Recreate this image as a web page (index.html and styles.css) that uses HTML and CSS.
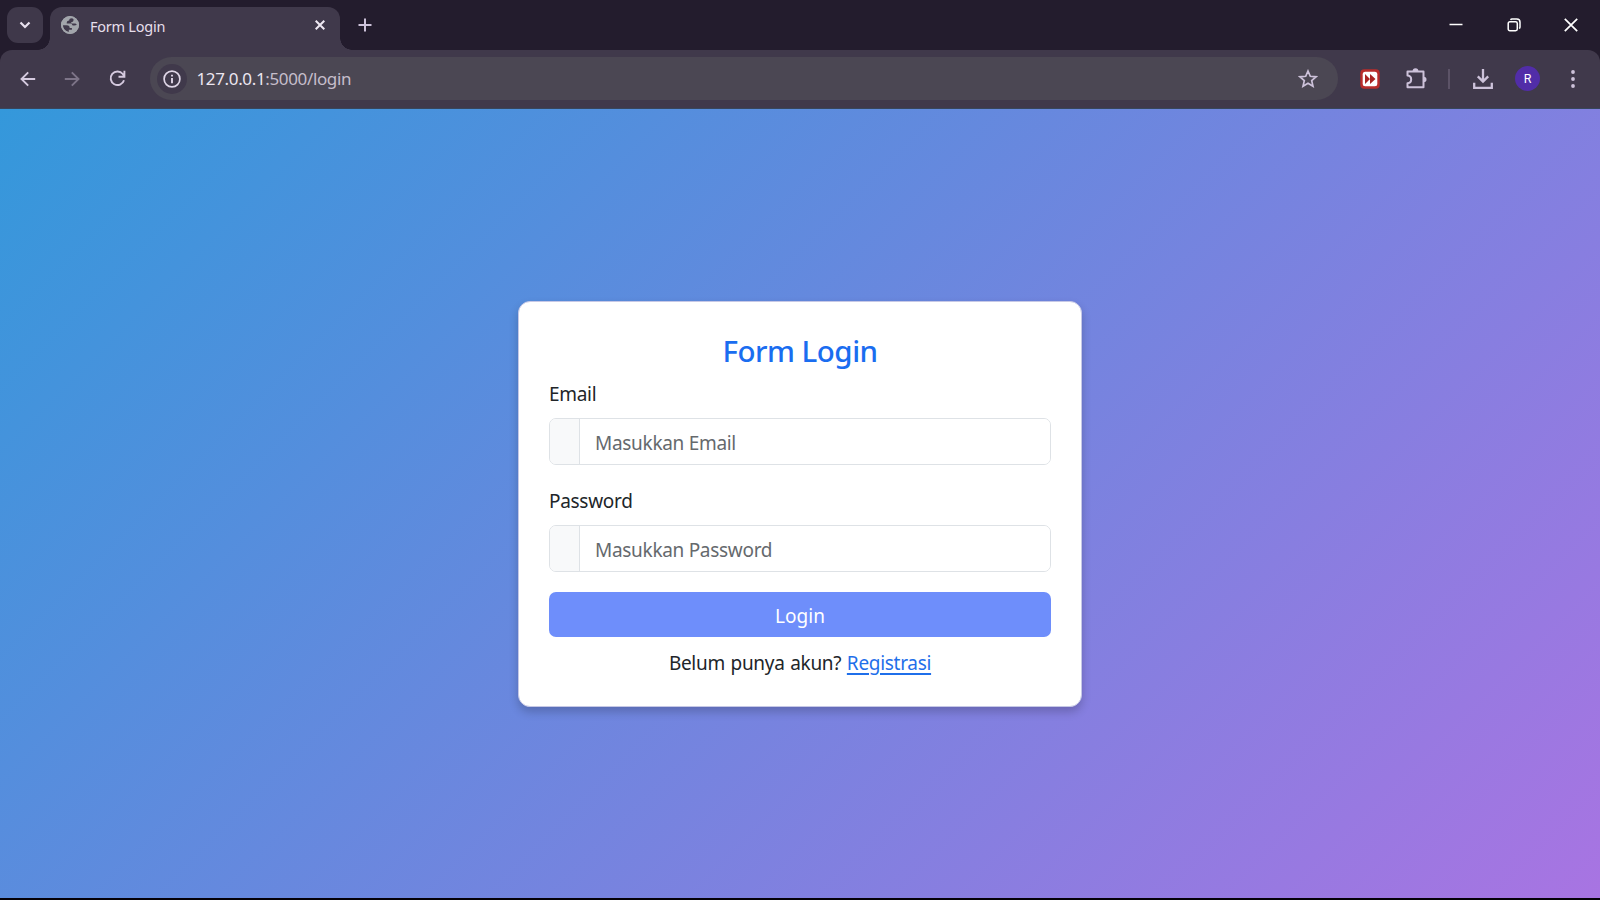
FILE: index.html
```html
<!DOCTYPE html>
<html lang="id">
<head>
<meta charset="utf-8">
<title>Form Login</title>
<link rel="stylesheet" href="styles.css">
</head>
<body>
<div class="window">
  <header class="tabstrip">
    <button class="tab-search" aria-label="Search tabs">
      <svg width="12" height="8" viewBox="0 0 12 8"><path d="M1.500 1.500 6 6l4.500-4.500" fill="none" stroke="#e8e0ee" stroke-width="2.200"/></svg>
    </button>
    <div class="tab">
      <svg width="18" height="18" viewBox="0 0 18 18"><circle cx="9" cy="9" r="9" fill="#a2a5ab"/><path d="M11.300 2.300C9 2.200 8.300 3 8.200 4.600 6.500 4.600 5.600 5.600 5.700 7.500H9.200c1.400 0 1.900.7 2.100 1.700 1.500.7 3.200.5 4.700-.4C16.100 5.700 14.200 3 11.300 2.300zM2 9.200H5.800c2 0 2.900 1 2.900 2.700H10.900v1.800H7.800v2.200C4.200 15.400 1.900 12.700 2 9.200z" fill="#40394b"/><path d="M12.500 2.500v1.400c0 1.300-.8 2.100-2.200 2.100v1.500h4.200l1.800 1.800V5z" fill="#a2a5ab"/><circle cx="9" cy="9" r="8.100" fill="none" stroke="#a2a5ab" stroke-width="1.800"/></svg>
      <span class="tab-title">Form Login</span>
      <svg class="tab-close" width="10" height="10" viewBox="0 0 10 10"><path d="M.7.7l8.600 8.600M9.300.7.7 9.300" stroke="#eee8f2" stroke-width="2"/></svg>
    </div>
    <svg class="new-tab" width="14" height="14" viewBox="0 0 14 14"><path d="M7 .5v13M.5 7h13" stroke="#cdc2da" stroke-width="2"/></svg>
    <div class="window-controls">
      <svg width="14" height="14" viewBox="0 0 14 14"><path d="M.5 6.500h13" stroke="#fff" stroke-width="1.500"/></svg>
      <svg width="14" height="14" viewBox="0 0 14 14"><g fill="none" stroke="#fff" stroke-width="1.500"><rect x="1.200" y="3.700" width="9.100" height="9.100" rx="1.700"/><path d="M3.500 1.800Q4 1 5 1h4.800Q13 1 13 4.200V9q0 1-.8 1.500"/></g></svg>
      <svg width="14" height="14" viewBox="0 0 14 14"><path d="M.8.8l12.400 12.400M13.200.8.8 13.200" stroke="#fff" stroke-width="1.700"/></svg>
    </div>
  </header>

  <nav class="toolbar">
    <svg width="16" height="16" viewBox="0 0 16 16"><path d="M15.200 8H2M8.200 1.300 1.500 8l6.700 6.700" fill="none" stroke="#d5cadf" stroke-width="1.900"/></svg>
    <svg class="forward" width="16" height="16" viewBox="0 0 16 16"><path d="M.8 8H14M7.800 1.300 14.500 8l-6.700 6.700" fill="none" stroke="#7d7488" stroke-width="1.900"/></svg>
    <svg class="reload" width="17" height="17" viewBox="0 0 17 17"><path d="M15 10.200A6.800 6.800 0 1 1 13.800 4l1.400 2.200M15.400.8v6H9.500" fill="none" stroke="#d5cadf" stroke-width="1.900"/></svg>
    <div class="omnibox">
      <span class="site-info"><svg width="18" height="18" viewBox="0 0 18 18"><circle cx="9" cy="9" r="7.900" fill="none" stroke="#dfd6e7" stroke-width="1.700"/><path d="M9 8v5.200M9 4.700v1.900" stroke="#dfd6e7" stroke-width="1.900"/></svg></span>
      <span class="url"><b>127.0.0.1</b>:5000/login</span>
      <svg class="star" width="20" height="19" viewBox="0 0 20 19"><path d="M10 2l2.300 5.300 5.700.5-4.300 3.800 1.300 5.700-5-3-5 3 1.300-5.700L2 7.800l5.700-.5z" fill="none" stroke="#cdc2da" stroke-width="1.700"/></svg>
    </div>
    <div class="actions">
      <svg width="20" height="20" viewBox="0 0 20 20"><rect x=".3" y=".3" width="19.400" height="19.400" rx="4" fill="#b92d2b"/><rect x="2.700" y="2.700" width="14.600" height="14.600" rx="2.500" fill="#fff"/><path d="M5 5l5 5-5 5zM10 5l5.500 5-5.500 5z" fill="#a92422"/></svg>
      <svg class="puzzle" width="22" height="22" viewBox="0 0 22 22"><path d="M2.500 3.500h16V19.300h-16v-4.100c4.900-.4 4.900-7.200 0-7.600z" fill="none" stroke="#cdc2da" stroke-width="2" stroke-linejoin="round"/><path d="M7.600 3.200a2.900 2.900 0 0 1 5.800 0zM18.800 8.700a2.700 2.700 0 0 1 0 5.400z" fill="#cdc2da"/></svg>
      <i class="divider"></i>
      <svg class="download" width="20" height="20" viewBox="0 0 20 20"><path d="M10 0v12M4.800 7.400l5.200 5.200 5.200-5.200M1.200 13.800v5h17.600v-5" fill="none" stroke="#cdc2da" stroke-width="2.300"/></svg>
      <span class="avatar">R</span>
      <svg class="menu" width="4" height="18" viewBox="0 0 4 18"><g fill="#cdc2da"><circle cx="2" cy="2" r="1.900"/><circle cx="2" cy="9" r="1.900"/><circle cx="2" cy="16" r="1.900"/></g></svg>
    </div>
  </nav>

  <main class="page">
    <form class="card">
      <h1 class="card-title">Form Login</h1>
      <label class="label" for="email">Email</label>
      <div class="input-group"><span class="addon"></span><input class="field" id="email" type="text" placeholder="Masukkan Email"></div>
      <label class="label" for="password">Password</label>
      <div class="input-group"><span class="addon"></span><input class="field" id="password" type="password" placeholder="Masukkan Password"></div>
      <button class="submit" type="button">Login</button>
      <p class="register">Belum punya akun? <a class="link" href="#">Registrasi</a></p>
    </form>
  </main>
</div>
</body>
</html>
```

FILE: styles.css
```css
* { box-sizing: border-box; }
body { margin: 0; font-family: "Noto Sans", "Open Sans", sans-serif; overflow: hidden; }
svg { display: block; flex: none; }
button { font-family: inherit; border: 0; padding: 0; }

.window { width: 1600px; height: 900px; display: flex; flex-direction: column; background: #231c2d; }

.tabstrip { height: 50px; flex: none; display: flex; padding-left: 7px; background: #231c2d; }
.tab-search { width: 36px; height: 36px; margin-top: 7px; border-radius: 11px; background: #3f384a; display: flex; align-items: center; justify-content: center; }
.tab { position: relative; width: 290px; height: 43px; margin: 7px 0 0 7px; padding: 0 15px 7px 11px; display: flex; align-items: center; background: #40394b; border-radius: 12px 12px 0 0; }
.tab::before, .tab::after { content: ""; position: absolute; bottom: 0; width: 12px; height: 12px; }
.tab::before { left: -12px; background: radial-gradient(circle at 0 0, transparent 11.500px, #40394b 12px); }
.tab::after { right: -12px; background: radial-gradient(circle at 100% 0, transparent 11.500px, #40394b 12px); }
.tab-title { margin: 1px 0 0 11px; font-size: 14.500px; letter-spacing: -.25px; line-height: 20px; color: #e6dfeb; }
.tab-close { margin-left: auto; }
.new-tab { margin: 18px 0 0 18px; }
.window-controls { display: flex; gap: 43.500px; margin: 17.500px 22px 0 auto; }

.toolbar { height: 59px; flex: none; display: flex; align-items: center; padding: 0 25px 1px 20px; background: #40394b; border-radius: 12px 12px 0 0; border-bottom: 1px solid #37465d; }
.forward { margin-left: 28px; }
.reload { margin-left: 29px; }
.omnibox { width: 1188px; height: 43px; margin-left: 23.500px; padding: 0 20px 0 7px; display: flex; align-items: center; background: #4b4753; border-radius: 22px; }
.site-info { width: 30px; height: 30px; border-radius: 50%; background: #40394b; display: flex; align-items: center; justify-content: center; }
.url { margin-left: 10px; font-size: 17px; letter-spacing: -.36px; line-height: 24px; color: #c5becb; }
.url b { font-weight: 400; color: #ece6f0; }
.star { margin-left: auto; }
.actions { flex: 1; display: flex; align-items: center; margin-left: 22.500px; }
.puzzle { margin-left: 25px; }
.divider { width: 2px; height: 20px; margin-left: 21px; background: #5c5367; }
.download { margin-left: 22.500px; }
.avatar { width: 25px; height: 25px; margin-left: 22.500px; border-radius: 50%; background: #512da8; color: #fff; font: 12.500px/26px Roboto, sans-serif; text-align: center; }
.menu { margin-left: auto; }

.page { height: 789px; flex: none; display: flex; justify-content: center; align-items: flex-start; padding-top: 192px; background: linear-gradient(135deg, #3498db, #a874e2); box-shadow: 0 2px #050108; }
.card { width: 564px; height: 406px; padding: 31px 30px 0; display: flex; flex-direction: column; background: #fff; border: 1px solid #c6c8e6; border-radius: 12px; box-shadow: 0 5px 10px rgba(0, 0, 0, .2); color: #212529; font-size: 19px; letter-spacing: -.3px; }
.card-title { margin: 0 0 9px; font-size: 29.500px; line-height: 36px; font-weight: 500; letter-spacing: -.5px; text-align: center; color: #1a6df0; }
.label { height: 32px; margin-bottom: 8px; line-height: 32px; }
.input-group { height: 47px; margin-bottom: 20px; flex: none; display: flex; border: 1px solid #dee2e6; border-radius: 7px; overflow: hidden; }
.addon { width: 30px; background: #f8f9fa; border-right: 1px solid #dee2e6; }
.field { flex: 1; min-width: 0; border: 0; padding: 3px 15px 0; outline: 0; background: #fff; font: inherit; letter-spacing: inherit; }
.field::placeholder { color: #65696d; opacity: 1; }
.submit { height: 45px; flex: none; padding-top: 3px; border-radius: 7px; background: #6e8efb; color: #fff; font-size: 19px; }
.register { margin: 11px 0 0; line-height: 30px; text-align: center; word-spacing: 1px; }
.link { color: #1f6fea; text-decoration: underline; text-decoration-thickness: 1.500px; text-underline-offset: 3px; }
```
